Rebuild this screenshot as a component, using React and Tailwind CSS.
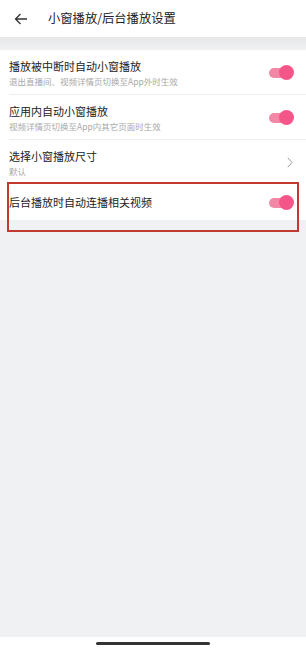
import React from 'react';

const font = { fontFamily: '"Noto Sans CJK SC", "Noto Sans", sans-serif' };

function Toggle() {
    return (
        <div className="relative w-[25px] h-[15px] flex items-center shrink-0">
            <div className="w-[22px] h-[10px] rounded-full bg-[#f287a6]" />
            <div className="absolute right-0 top-0 w-[15px] h-[15px] rounded-full bg-[#f5568a]" />
        </div>
    );
}

function Row({ title, sub, right, last }) {
    return (
        <div className="flex items-center justify-between pl-[9px] pr-[12px] h-[45px] bg-white relative">
            <div className="flex flex-col">
                <span className="text-[11px] leading-[15px] text-[#222]">{title}</span>
                {sub && <span className="text-[8.5px] leading-[12px] text-[#a9a9a9] mt-[1px]">{sub}</span>}
            </div>
            {right}
            {!last && <div className="absolute left-[9px] right-0 bottom-0 h-px bg-[#eeeeee]" />}
        </div>
    );
}

export default function App() {
    return (
        <div className="w-[306px] h-[650px] flex flex-col bg-[#f0f1f3]" style={font}>
            <div className="h-[37px] bg-white flex items-center shrink-0">
                <svg width="14" height="12" viewBox="0 0 14 12" className="ml-[14px]">
                    <path d="M13 6H1.5M6.5 1L1.5 6l5 5" fill="none" stroke="#333" strokeWidth="1.3" />
                </svg>
                <span className="ml-[20px] text-[12.3px] text-[#222]">小窗播放/后台播放设置</span>
            </div>
            <div className="h-[13px] shrink-0 bg-gradient-to-b from-[#e6e7e9] to-[#f0f1f3]" />
            <Row title="播放被中断时自动小窗播放" sub="退出直播间、视频详情页切换至App外时生效" right={<Toggle />} />
            <Row title="应用内自动小窗播放" sub="视频详情页切换至App内其它页面时生效" right={<Toggle />} />
            <Row
                title="选择小窗播放尺寸"
                sub="默认"
                last
                right={
                    <svg width="6" height="11" viewBox="0 0 6 11" className="mr-[1px]">
                        <path d="M0.8 0.8L5 5.5 0.8 10.2" fill="none" stroke="#9a9a9a" strokeWidth="1" />
                    </svg>
                }
            />
            <div className="relative">
                <div className="flex items-center justify-between pl-[9px] pr-[12px] h-[35px] bg-white">
                    <span className="text-[11px] text-[#222]">后台播放时自动连播相关视频</span>
                    <Toggle />
                </div>
                <div className="absolute left-[7px] right-[7px] top-[-3px] h-[50px] border-2 border-[#c23a2e]" />
            </div>
            <div className="flex-1" />
            <div className="h-[13px] bg-white flex justify-center shrink-0">
                <div className="w-[114px] h-[3px] rounded-full bg-[#333] mt-[5px]" />
            </div>
        </div>
    );
}
